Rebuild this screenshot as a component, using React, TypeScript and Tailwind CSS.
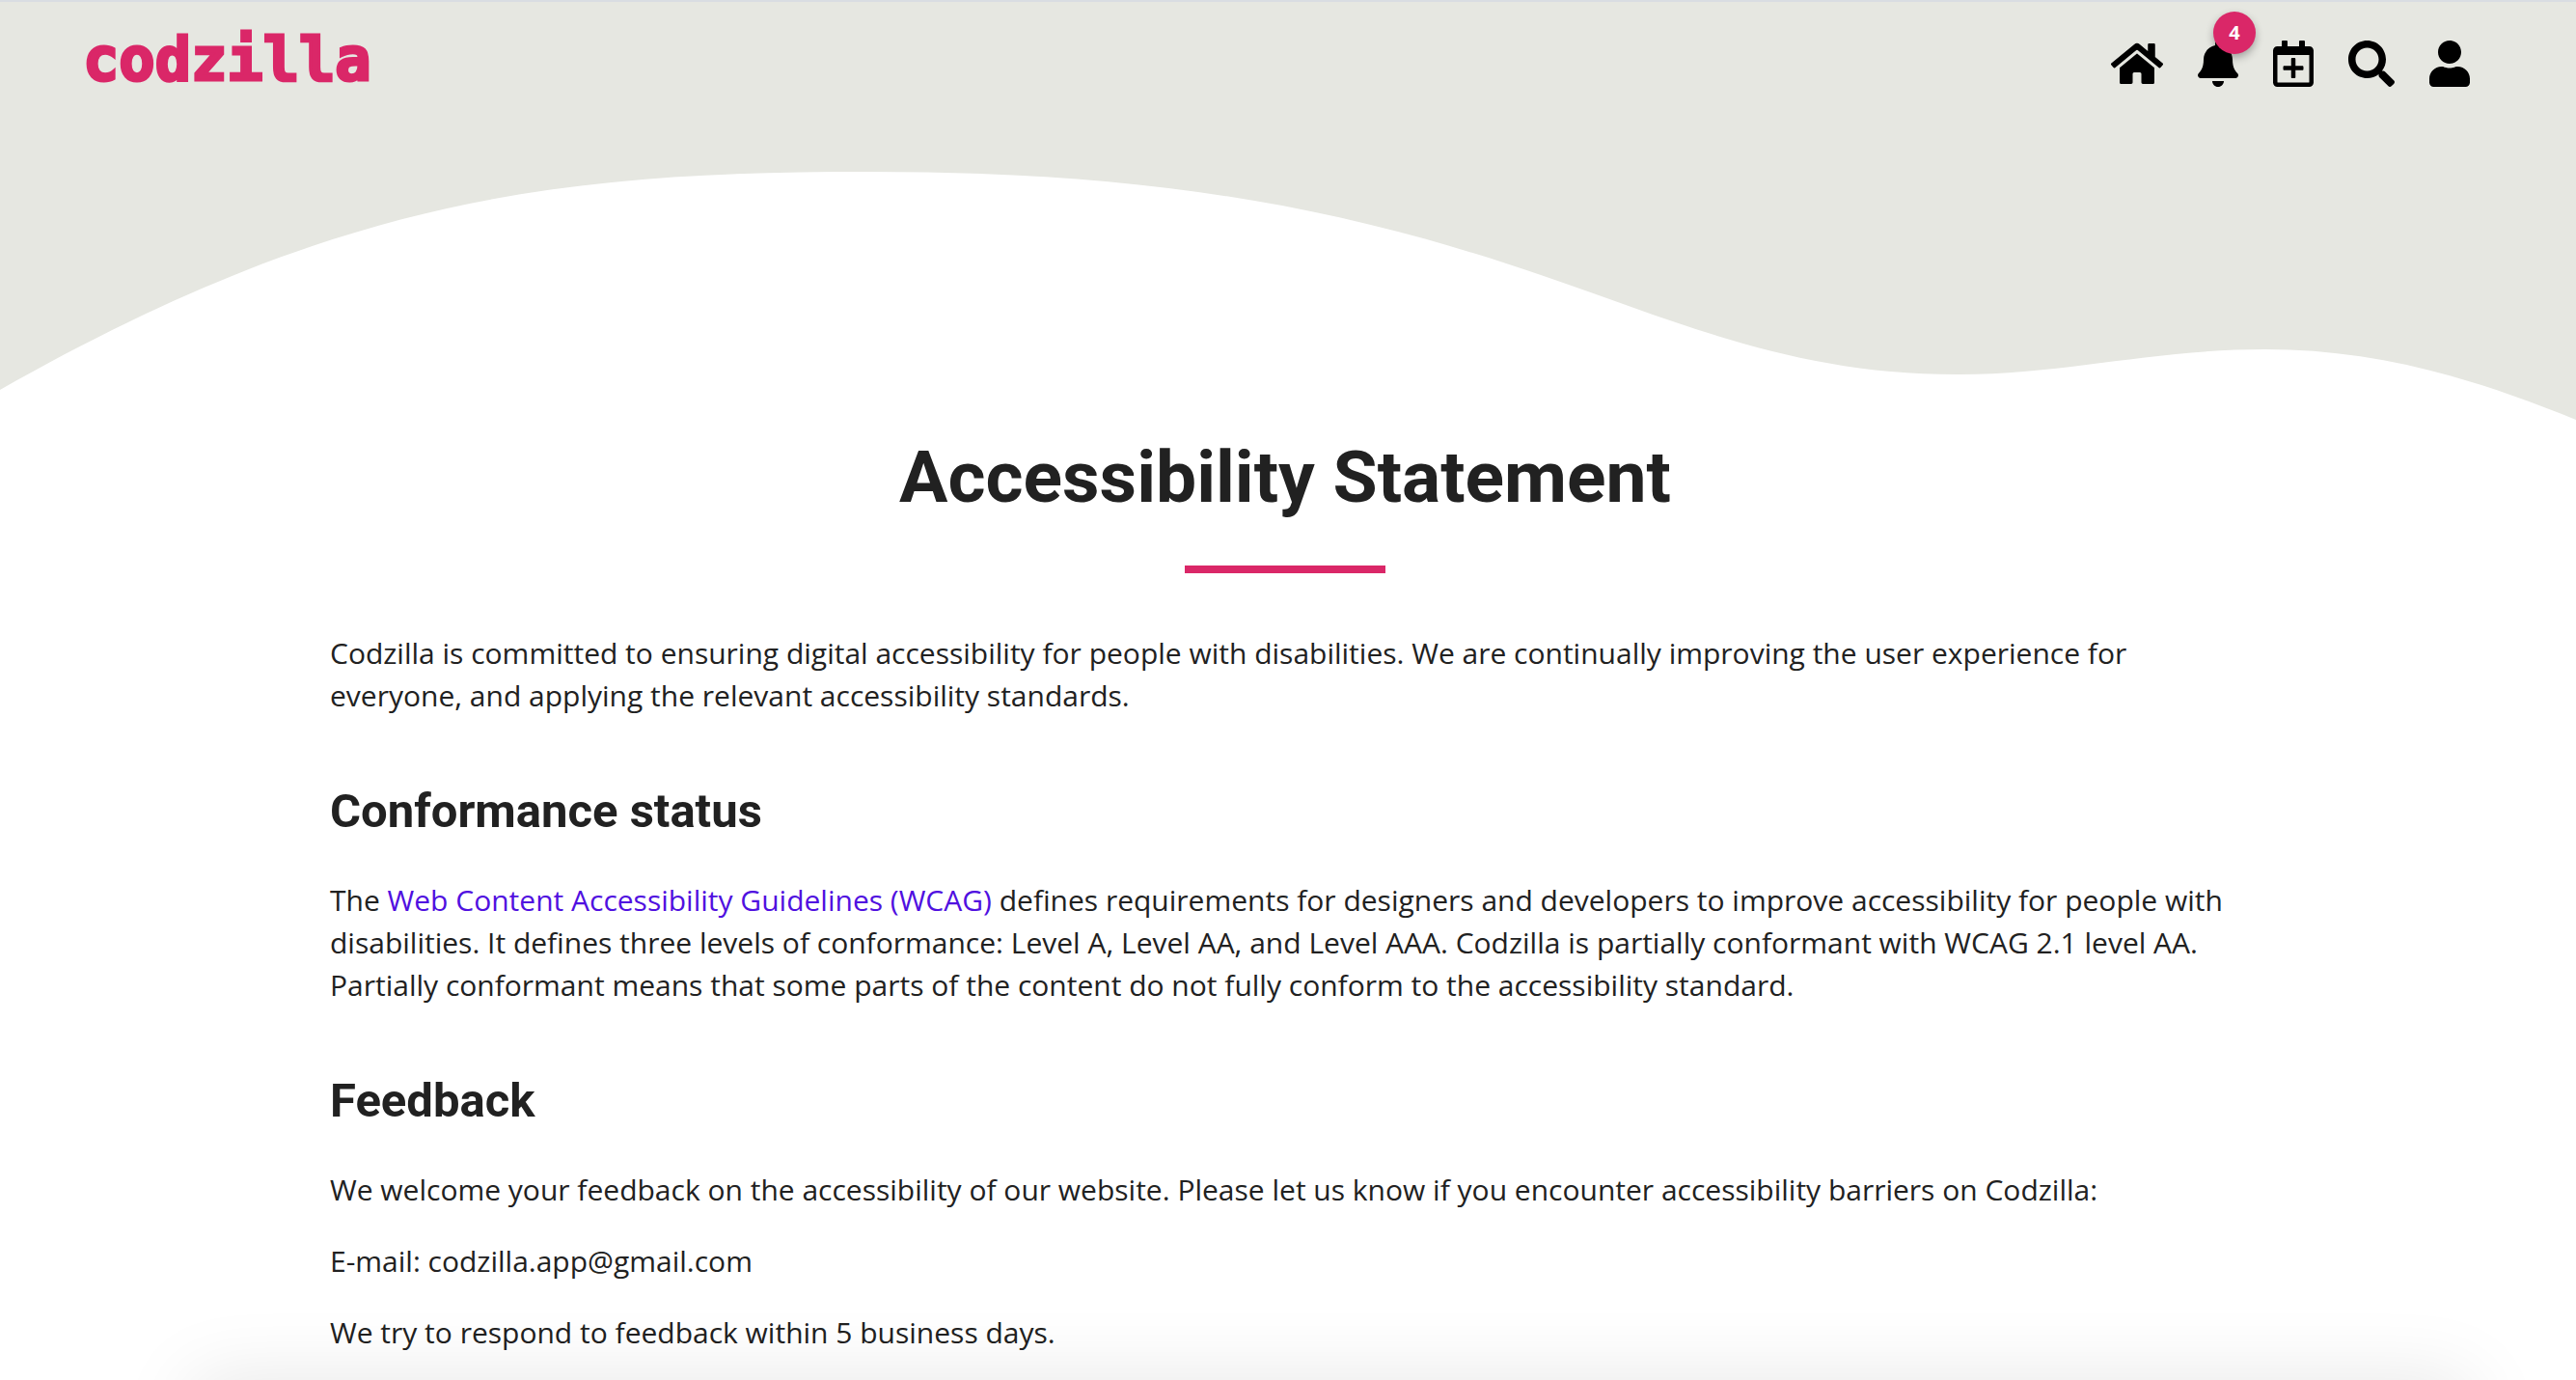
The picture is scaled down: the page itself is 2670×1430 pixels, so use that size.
import React from "react";
import { FaHome, FaBell, FaRegCalendarPlus, FaSearch, FaUser } from "react-icons/fa";

function Logo() {
  return (
    <a
      href="#"
      className="font-['DejaVu_Sans_Mono',monospace] text-[62px] leading-[72px] font-bold text-[#da2768] [-webkit-text-stroke:3px_#da2768]"
    >
      codzilla
    </a>
  );
}

function NavBar() {
  return (
    <header className="flex items-start justify-between pt-6 pr-[110px] pl-[86px]">
      <Logo />
      <nav aria-label="Main" className="flex items-center gap-9 pt-4 text-black">
        <a href="#" aria-label="Home">
          <FaHome className="h-12 w-[54px]" />
        </a>
        <button type="button" aria-label="Notifications, 4 unread" className="relative">
          <FaBell className="h-12 w-[42px]" />
          <span className="absolute -top-[30px] left-4 flex size-11 items-center justify-center rounded-full bg-[#da2768] text-[20px] leading-none font-bold text-white shadow-[0_4px_8px_rgba(0,0,0,0.3)]">
            4
          </span>
        </button>
        <a href="#" aria-label="New event">
          <FaRegCalendarPlus className="h-12 w-[42px]" />
        </a>
        <button type="button" aria-label="Search">
          <FaSearch className="size-12" />
        </button>
        <a href="#" aria-label="Profile">
          <FaUser className="h-12 w-[42px]" />
        </a>
      </nav>
    </header>
  );
}

function Wave() {
  return (
    <svg viewBox="0 0 2670 260" className="block w-full" aria-hidden="true">
      <path
        fill="#ffffff"
        d="M0,229C350,30,580,3,900,3C1180,3,1380,35,1600,111C1740,159,1860,213,2028,213C2140,213,2230,187,2348,187C2460,187,2560,215,2670,260V261H0Z"
      />
    </svg>
  );
}

function SectionTitle({ children }: { children: React.ReactNode }) {
  return (
    <h2 className="mt-[66px] mb-[38px] font-[Roboto,sans-serif] text-[49px] leading-[64px] font-bold">
      {children}
    </h2>
  );
}

export default function App() {
  return (
    <div className="h-screen overflow-hidden bg-white font-['Open_Sans',sans-serif] text-[#212121]">
      <div className="border-t-2 border-[#d9dde2] bg-[#e6e7e1]">
        <NavBar />
        <div className="pt-[77px]">
          <Wave />
        </div>
      </div>

      <div className="pr-[6px]">
        <main className="mx-auto max-w-[1980px] text-[30px] leading-[44px]">
          <h1 className="mt-[15px] text-center font-[Roboto,sans-serif] text-[75px] leading-[88px] font-bold">
            Accessibility Statement
          </h1>
          <div className="mx-auto mt-12 mb-[61px] h-2 w-52 bg-[#da2768]" />
          <p>
            Codzilla is committed to ensuring digital accessibility for people with disabilities. We
            are continually improving the user experience for everyone, and applying the relevant
            accessibility standards.
          </p>

          <SectionTitle>Conformance status</SectionTitle>
          <p>
            The{" "}
            <a href="#" className="text-[#5010e0]">
              Web Content Accessibility Guidelines (WCAG)
            </a>{" "}
            defines requirements for designers and developers to improve accessibility for people
            with disabilities. It defines three levels of conformance: Level A, Level AA, and Level
            AAA. Codzilla is partially conformant with WCAG 2.1 level AA. Partially conformant means
            that some parts of the content do not fully conform to the accessibility standard.
          </p>

          <SectionTitle>Feedback</SectionTitle>
          <div className="flex flex-col gap-[30px]">
            <p>
              We welcome your feedback on the accessibility of our website. Please let us know if
              you encounter accessibility barriers on Codzilla:
            </p>
            <p>E-mail: codzilla.app@gmail.com</p>
            <p>We try to respond to feedback within 5 business days.</p>
          </div>
        </main>
      </div>

      <div className="fixed top-full right-[110px] left-[200px] h-20 shadow-[0_0_80px_rgba(0,0,0,0.1)]" />
    </div>
  );
}
